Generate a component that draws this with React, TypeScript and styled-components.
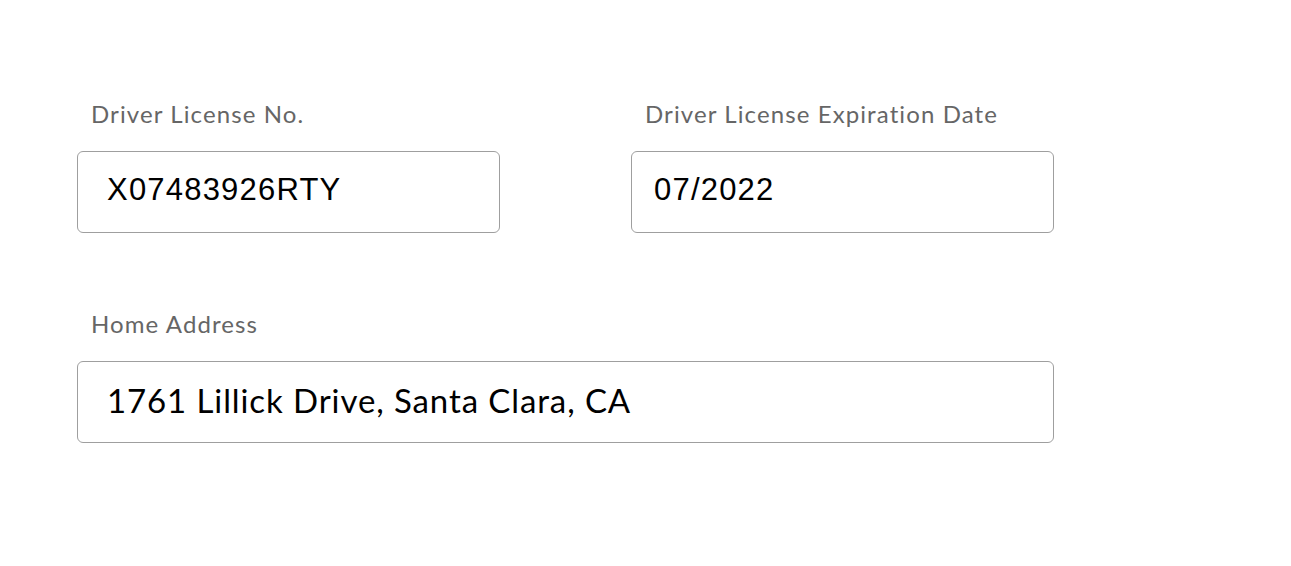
import React from 'react'
import styled, { createGlobalStyle } from 'styled-components'

const GlobalStyle = createGlobalStyle`
  html, body {
    margin: 0;
    padding: 0;
    background: #ffffff;
  }
  body {
    font-family: Lato, "Noto Sans", sans-serif;
  }
`

const Form = styled.form`
  display: grid;
  grid-template-columns: 423px 423px;
  column-gap: 131px;
  row-gap: 74px;
  padding: 97px 0 0 77px;
`

const Field = styled.label<{ $wide?: boolean }>`
  display: flex;
  flex-direction: column;
  gap: 20px;
  grid-column: ${(p) => (p.$wide ? '1 / span 2' : 'auto')};
`

const Label = styled.span`
  padding-left: 14px;
  font-family: Lato, "Noto Sans", sans-serif;
  font-size: 24px;
  letter-spacing: 1.1px;
  line-height: 34px;
  color: #666666;
`

const Box = styled.div<{ $mono?: boolean; $inset?: number }>`
  box-sizing: border-box;
  height: 82px;
  display: flex;
  align-items: center;
  padding: 0 0 5px ${(p) => p.$inset ?? 29}px;
  border: 1.5px solid #9f9f9f;
  border-radius: 6px;
  color: #000000;
  font-family: ${(p) => (p.$mono ? '"Liberation Sans", Arial, sans-serif' : 'Lato, "Noto Sans", sans-serif')};
  font-size: ${(p) => (p.$mono ? '31px' : '33px')};
  letter-spacing: ${(p) => (p.$mono ? '1.2px' : '0.9px')};
`

export default function App() {
  return (
    <>
      <GlobalStyle />
      <Form>
        <Field>
          <Label>Driver License No.</Label>
          <Box $mono>X07483926RTY</Box>
        </Field>
        <Field>
          <Label>Driver License Expiration Date</Label>
          <Box $mono $inset={22}>07/2022</Box>
        </Field>
        <Field $wide>
          <Label>Home Address</Label>
          <Box>1761 Lillick Drive, Santa Clara, CA</Box>
        </Field>
      </Form>
    </>
  )
}
